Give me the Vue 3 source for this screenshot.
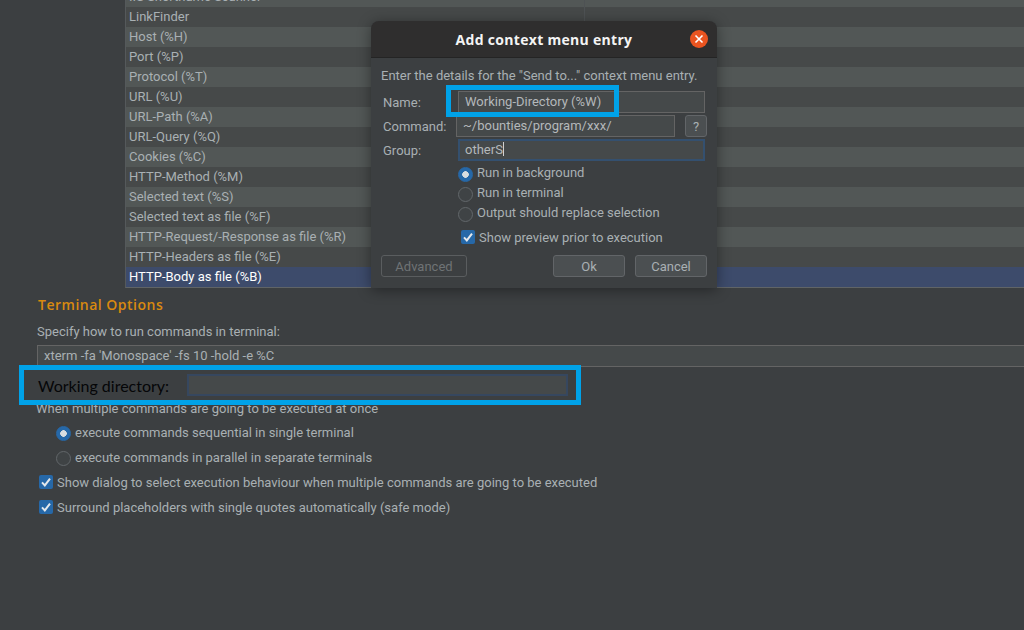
<template>
  <div class="page">
    <div class="table">
      <div
        v-for="(row, i) in rows"
        :key="row"
        class="table-row"
        :class="{ light: i % 2 === 0, selected: i === rows.length - 1 }"
      >
        <span class="cell-name">{{ row }}</span>
        <span class="cell-rest"></span>
      </div>
    </div>

    <section class="terminal">
      <h2 class="section-title">Terminal Options</h2>
      <p class="specify">Specify how to run commands in terminal:</p>
      <div class="term-input">xterm -fa 'Monospace' -fs 10 -hold -e %C</div>
      <div class="workdir">
        <span class="workdir-label">Working directory:</span>
        <div class="workdir-input"></div>
      </div>
      <p class="multiple">When multiple commands are going to be executed at once</p>
      <label class="opt opt-radio first">
        <span class="radio on"></span>execute commands sequential in single terminal
      </label>
      <label class="opt opt-radio second">
        <span class="radio"></span>execute commands in parallel in separate terminals
      </label>
      <label class="opt opt-check third">
        <span class="check">
          <svg width="14" height="14" viewBox="0 0 14 14" fill="none">
            <path d="M3 7.4l2.8 3L11 3.6" stroke="#e4e8ec" stroke-width="2"/>
          </svg>
        </span>Show dialog to select execution behaviour when multiple commands are going to be executed
      </label>
      <label class="opt opt-check fourth">
        <span class="check">
          <svg width="14" height="14" viewBox="0 0 14 14" fill="none">
            <path d="M3 7.4l2.8 3L11 3.6" stroke="#e4e8ec" stroke-width="2"/>
          </svg>
        </span>Surround placeholders with single quotes automatically (safe mode)
      </label>
    </section>

    <div class="dialog">
      <header class="dialog-head">
        <span class="dialog-title">Add context menu entry</span>
        <span class="close">
          <svg width="10" height="10" viewBox="0 0 10 10" fill="none">
            <path d="M1.5 1.5l7 7M8.5 1.5l-7 7" stroke="#fff" stroke-width="1.6"/>
          </svg>
        </span>
      </header>
      <div class="dialog-body">
        <p class="intro">Enter the details for the "Send to..." context menu entry.</p>
        <div class="field field-name">
          <span class="field-label">Name:</span>
          <div class="input name-input">Working-Directory (%W)</div>
        </div>
        <div class="field">
          <span class="field-label">Command:</span>
          <div class="input command-input">~/bounties/program/xxx/</div>
          <button class="btn help">?</button>
        </div>
        <div class="field">
          <span class="field-label">Group:</span>
          <div class="input group-input">otherS<span class="caret"></span></div>
        </div>
        <div class="radios">
          <label class="d-radio"><span class="radio on"></span>Run in background</label>
          <label class="d-radio"><span class="radio"></span>Run in terminal</label>
          <label class="d-radio"><span class="radio"></span>Output should replace selection</label>
        </div>
        <label class="preview">
          <span class="check">
            <svg width="14" height="14" viewBox="0 0 14 14" fill="none">
              <path d="M3 7.4l2.8 3L11 3.6" stroke="#e4e8ec" stroke-width="2"/>
            </svg>
          </span>Show preview prior to execution
        </label>
        <div class="buttons">
          <button class="btn advanced">Advanced</button>
          <span class="spacer"></span>
          <button class="btn action">Ok</button>
          <button class="btn action">Cancel</button>
        </div>
      </div>
      <div class="name-highlight"></div>
    </div>
  </div>
</template>

<script setup>
const rows = [
  'IIS Shortname Scanner',
  'LinkFinder',
  'Host (%H)',
  'Port (%P)',
  'Protocol (%T)',
  'URL (%U)',
  'URL-Path (%A)',
  'URL-Query (%Q)',
  'Cookies (%C)',
  'HTTP-Method (%M)',
  'Selected text (%S)',
  'Selected text as file (%F)',
  'HTTP-Request/-Response as file (%R)',
  'HTTP-Headers as file (%E)',
  'HTTP-Body as file (%B)'
]
</script>

<style>
html, body {
  margin: 0;
  background: #3c3f41;
  overflow: hidden;
}
</style>

<style scoped>
.page {
  position: relative;
  width: 1024px;
  height: 630px;
  overflow: hidden;
  background: #3c3f41;
  color: #a9b0b3;
  font-family: Roboto, "Liberation Sans", Arial, sans-serif;
  font-size: 13px;
}

.table {
  margin: -13px 0 0 125px;
  border-left: 1px solid #55595b;
  border-bottom: 1px solid #606466;
}

.table-row {
  display: flex;
  height: 20px;
  line-height: 20px;
  background: #464949;
}

.table-row.light {
  background: #525756;
}

.table-row.selected {
  background: #3d4b6b;
  color: #fff;
}

.cell-name {
  width: 459px;
  padding-left: 3px;
  border-right: 1px solid #4e5254;
  box-sizing: border-box;
  flex-shrink: 0;
}

.terminal {
  padding: 8px 0 0 37px;
}

.section-title {
  margin: 0;
  height: 18px;
  padding-left: 1px;
  font-family: "Open Sans", sans-serif;
  font-size: 14px;
  line-height: 18px;
  font-weight: 600;
  letter-spacing: 0.5px;
  color: #d98a0f;
}

.specify {
  margin: 9px 0 0;
  line-height: 18px;
}

.term-input {
  box-sizing: border-box;
  height: 22px;
  margin-top: 4px;
  padding-left: 6px;
  line-height: 20px;
  background: #45494a;
  border: 1px solid #646464;
  border-right: none;
}

.workdir {
  position: relative;
  box-sizing: border-box;
  display: flex;
  align-items: center;
  width: 562px;
  height: 40px;
  margin: -2px 0 0 -18px;
  padding-left: 14px;
  border: 5px solid #00a2e8;
  background: #3c3f41;
}

.workdir-label {
  width: 149px;
  flex-shrink: 0;
  font-family: Lato, sans-serif;
  font-size: 16px;
  color: #050608;
}

.workdir-input {
  box-sizing: border-box;
  width: 381px;
  height: 22px;
  background: #45494a;
  border: 2px solid #36475f;
}

.multiple {
  margin: -5px 0 0 -1px;
  line-height: 18px;
}

.opt {
  display: flex;
  align-items: center;
  height: 18px;
}

.opt-radio {
  margin-left: 19px;
}

.opt-radio .radio {
  margin-top: 3px;
}

.first { margin-top: 5px; }
.second { margin-top: 7px; }
.third { margin-top: 7px; margin-left: 2px; }
.fourth { margin-top: 7px; margin-left: 2px; }

.radio {
  box-sizing: border-box;
  flex-shrink: 0;
  width: 15px;
  height: 15px;
  margin-right: 4px;
  border-radius: 50%;
  background: #3f4345;
  border: 1px solid #62676a;
}

.radio.on {
  background: radial-gradient(circle, #d8dde0 0 3px, #2668a8 3.6px);
  border-color: #2668a8;
}

.check {
  box-sizing: border-box;
  display: flex;
  align-items: center;
  justify-content: center;
  flex-shrink: 0;
  width: 14px;
  height: 14px;
  margin-right: 4px;
  border-radius: 2px;
  background: #2668a8;
}

.dialog {
  position: absolute;
  left: 371px;
  top: 21px;
  width: 346px;
  height: 267px;
  border-radius: 8px 8px 0 0;
  background: #3c3f41;
  box-shadow: 0 2px 14px rgba(0, 0, 0, 0.4);
}

.dialog-head {
  display: flex;
  align-items: center;
  justify-content: center;
  position: relative;
  box-sizing: border-box;
  height: 37px;
  background: #2f2e2e;
  border-radius: 8px 8px 0 0;
  border-bottom: 1px solid #242424;
}

.dialog-title {
  font-family: "Open Sans", sans-serif;
  font-size: 14px;
  font-weight: 700;
  letter-spacing: 0.3px;
  color: #f4f4f4;
}

.close {
  position: absolute;
  right: 9px;
  top: 9px;
  width: 18px;
  height: 18px;
  border-radius: 50%;
  background: #ea5420;
  display: flex;
  align-items: center;
  justify-content: center;
}

.dialog-body {
  padding: 0 10px;
}

.intro {
  margin: 0;
  padding-top: 9px;
  line-height: 18px;
  white-space: nowrap;
}

.field {
  display: flex;
  align-items: center;
  height: 24px;
}

.field-name {
  margin-top: 5px;
}

.field-label {
  width: 75px;
  flex-shrink: 0;
  padding-left: 2px;
  box-sizing: border-box;
}

.input {
  box-sizing: border-box;
  height: 22px;
  line-height: 20px;
  padding-left: 6px;
  background: #45494a;
  border: 1px solid #646464;
  color: #b4b8ba;
}

.name-input {
  width: 247px;
  margin-left: 2px;
}

.command-input {
  width: 219px;
}

.group-input {
  width: 247px;
  margin-left: 2px;
  border: 2px solid #34506f;
  line-height: 18px;
  padding-left: 5px;
}

.caret {
  display: inline-block;
  width: 1px;
  height: 14px;
  background: #d0d0d0;
  vertical-align: -2px;
}

.radios {
  margin-left: 77px;
}

.d-radio {
  display: flex;
  align-items: center;
  height: 20px;
}

.d-radio .radio {
  margin-top: 4px;
}

.preview {
  display: flex;
  align-items: center;
  height: 18px;
  margin: 6px 0 0 80px;
}

.buttons {
  display: flex;
  align-items: center;
  gap: 10px;
  margin-top: 9px;
}

.spacer {
  flex: 1;
}

.btn {
  box-sizing: border-box;
  height: 22px;
  padding: 0;
  border-radius: 3px;
  background: #4b4f51;
  border: 1px solid #626568;
  color: #a9b0b3;
  font-family: Roboto, "Liberation Sans", Arial, sans-serif;
  font-size: 13px;
}

.help {
  width: 22px;
  margin-left: 10px;
}

.advanced {
  width: 86px;
  background: #3c3f41;
  color: #6f7375;
  border-color: #5a5d5f;
}

.action {
  width: 72px;
}

.name-highlight {
  position: absolute;
  left: 75px;
  top: 64px;
  width: 173px;
  height: 32px;
  box-sizing: border-box;
  border: 5px solid #00a2e8;
  pointer-events: none;
}
</style>
